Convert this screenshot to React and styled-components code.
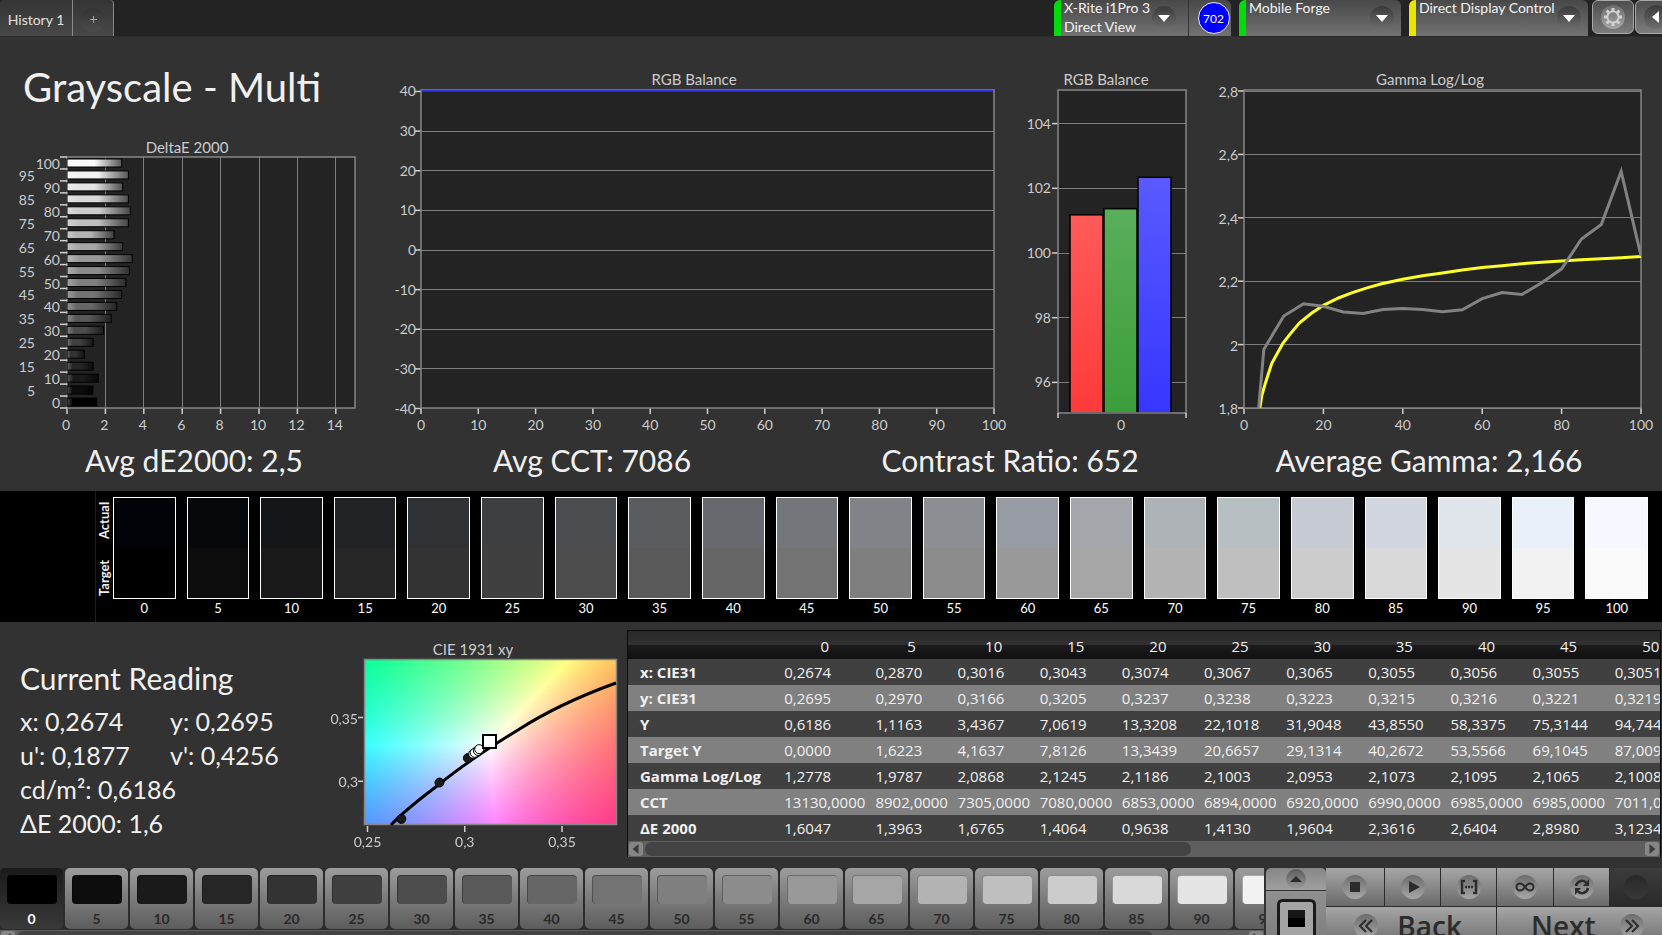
/* Third Party */
import React, { useEffect, useRef } from 'react'
import styled, { createGlobalStyle, css } from 'styled-components'

const GlobalStyle = createGlobalStyle`
    * {
        box-sizing: border-box;
    }

    body {
        margin: 0;
        background: #323232;
        color: #f0f0f0;
        font-family: Lato, "Liberation Sans", sans-serif;
        font-size: 14px;
    }

    button {
        margin: 0;
        padding: 0;
        border: 0;
        background: none;
        color: inherit;
        font: inherit;
        cursor: pointer;
    }
`

/* Data */
const LEVELS = Array.from({ length: 21 }, (_, i) => i * 5)

const DELTA_E = [
    1.6, 1.4, 1.68, 1.41, 0.96, 1.41, 1.96, 2.36, 2.64, 2.9, 3.12,
    3.3, 3.45, 2.95, 2.5, 3.25, 3.35, 3.25, 2.95, 3.25, 2.9
]

const ACTUAL = [
    '#020308', '#06080c', '#151618', '#212225', '#303134', '#3e3f41', '#4c4d50',
    '#5b5c60', '#68696e', '#73767b', '#808388', '#8b8f93', '#979ba4', '#a3a7ac',
    '#adb2b7', '#b7bfc3', '#c5cad3', '#d2d6e1', '#dfe5ea', '#e9f0fa', '#f5f9ff'
]

const MEASURED_GAMMA = [
    [0, 1.2778], [5, 1.985], [10, 2.09], [15, 2.129], [20, 2.121], [25, 2.103],
    [30, 2.098], [35, 2.111], [40, 2.114], [45, 2.111], [50, 2.104], [55, 2.11],
    [60, 2.145], [65, 2.164], [70, 2.158], [75, 2.195], [80, 2.239],
    [85, 2.333], [90, 2.379], [95, 2.546], [100, 2.28]
]

const TARGET_GAMMA = [
    [4, 1.8], [4.5, 1.84], [5.5, 1.883], [7, 1.941], [9.8, 2.004], [11.6, 2.033],
    [14, 2.069], [17, 2.099], [20, 2.124], [23.8, 2.147], [27.3, 2.164],
    [31, 2.179], [34.7, 2.192], [40, 2.206], [45, 2.217], [50, 2.226],
    [55, 2.235], [60, 2.243], [65, 2.249], [70, 2.255], [75, 2.26],
    [80, 2.264], [85, 2.268], [90, 2.271], [95, 2.274], [100, 2.278]
]

const CIE_POINTS = [
    [0.2674, 0.2705], [0.287, 0.299], [0.3016, 0.3182], [0.3043, 0.3215], [0.3067, 0.3243],
    [0.3056, 0.3228], [0.3051, 0.3223], [0.3068, 0.3238], [0.3074, 0.3252]
]

const TABLE_ROWS = [
    ['x: CIE31', '0,2674', '0,2870', '0,3016', '0,3043', '0,3074', '0,3067', '0,3065', '0,3055', '0,3056', '0,3055', '0,3051'],
    ['y: CIE31', '0,2695', '0,2970', '0,3166', '0,3205', '0,3237', '0,3238', '0,3223', '0,3215', '0,3216', '0,3221', '0,3219'],
    ['Y', '0,6186', '1,1163', '3,4367', '7,0619', '13,3208', '22,1018', '31,9048', '43,8550', '58,3375', '75,3144', '94,744'],
    ['Target Y', '0,0000', '1,6223', '4,1637', '7,8126', '13,3439', '20,6657', '29,1314', '40,2672', '53,5566', '69,1045', '87,009'],
    ['Gamma Log/Log', '1,2778', '1,9787', '2,0868', '2,1245', '2,1186', '2,1003', '2,0953', '2,1073', '2,1095', '2,1065', '2,1008'],
    ['CCT', '13130,0000', '8902,0000', '7305,0000', '7080,0000', '6853,0000', '6894,0000', '6920,0000', '6990,0000', '6985,0000', '6985,0000', '7011,0000'],
    ['ΔE 2000', '1,6047', '1,3963', '1,6765', '1,4064', '0,9638', '1,4130', '1,9604', '2,3616', '2,6404', '2,8980', '3,1234']
]

const gray = (level) => {
    const v = Math.min(Math.round(level * 2.55), 250)
    return `rgb(${v}, ${v}, ${v})`
}

const comma = (n) => String(n).replace('.', ',')

const toPoints = (data, x, y) => data.map(([a, b]) => `${x(a)},${y(b)}`).join(' ')

/* Page */
const Page = styled.div`
    display: flex;
    flex-direction: column;
    height: 100vh;
    overflow: hidden;
`

const TopBar = styled.header`
    display: flex;
    justify-content: space-between;
    flex: none;
    height: 37px;
    background: #232323;
    border-bottom: 1px solid #2b2b2b;
    overflow: hidden;
`

const Tabs = styled.nav`
    display: flex;
`

const Tab = styled.button`
    display: flex;
    align-items: center;
    justify-content: center;
    width: ${props => props.$wide ? '73px' : '41px'};
    padding-top: 3px;
    color: #e0e0e0;
    white-space: nowrap;
    background: linear-gradient(#343434, #484848);
    border-right: 1px solid #8a8a8a;
    border-radius: ${props => props.$wide ? '4px 0 0 0' : '0 4px 0 0'};
`

const Round = styled.span`
    display: flex;
    align-items: center;
    justify-content: center;
    flex: none;
    width: 24px;
    height: 24px;
    border-radius: 50%;
    background: ${props => props.$light
        ? 'linear-gradient(#6c6c6c, #a6a6a6)'
        : 'linear-gradient(#3a3a3a, #6e6e6e)'};
`

const AddRound = styled(Round)`
    background: linear-gradient(#323232, #4c4c4c);
`

const Devices = styled.div`
    display: flex;
    flex: none;
    margin-right: -16px;
`

const Device = styled.div`
    display: flex;
    width: ${props => props.$width}px;
    margin-right: 8px;
    border-left: 7px solid ${props => props.$status};
    border-radius: 6px 6px 0 0;
    background: linear-gradient(#484848, #727272);
`

const DeviceName = styled.div`
    flex: 1;
    padding-left: 3px;
    line-height: 19px;
    margin-top: -2px;
    color: #f4f4f4;
    white-space: nowrap;
`

const DeviceMenu = styled.button`
    align-self: flex-start;
    margin: 6px ${props => props.$inset ? '12px' : '7px'} 0 0;
`

const MeterCell = styled.div`
    display: flex;
    align-items: center;
    justify-content: center;
    width: 43px;
    padding-left: 7px;
    border-left: 1px solid #353535;
`

const Meter = styled.span`
    display: flex;
    align-items: center;
    justify-content: center;
    flex: none;
    width: 32px;
    height: 32px;
    border: 1px solid #f0f0f0;
    border-radius: 50%;
    background: #0000ff;
    color: #ffffff;
    font-size: 12px;
`

const ToolButton = styled.button`
    display: flex;
    align-items: center;
    justify-content: center;
    width: 42px;
    height: 34px;
    margin-right: 1px;
    border: 1px solid #a8a8a8;
    border-radius: 6px;
    background: linear-gradient(#4e4e4e, #7c7c7c);

    &:first-of-type {
        margin-left: -4px;
    }
`

/* Charts */
const Charts = styled.section`
    display: grid;
    grid-template-columns: 390fr 622fr 200fr 450fr;
    align-items: end;
    flex: none;
`

const Title = styled.h1`
    margin: 28px 0 26px 23px;
    font-size: 40px;
    font-weight: 400;
    line-height: 44px;
    white-space: nowrap;
`

const ChartSvg = styled.svg`
    display: block;
    width: 100%;
    height: auto;
    overflow: visible;

    text {
        fill: #cccccc;
        font-size: 14px;
    }

    .title {
        font-size: 15px;
    }

    .plot {
        fill: #232323;
    }

    .frame {
        fill: none;
        stroke: #868686;
        stroke-width: 1.5;
    }

    .grid {
        stroke: #7c7c7c;
        shape-rendering: crispEdges;
    }

    .tick {
        stroke: #d0d0d0;
        stroke-width: 1.5;
    }
`

const Summary = styled.section`
    display: grid;
    grid-template-columns: 388fr 408fr 428fr 410fr 28fr;
    flex: none;
    padding: 8px 0 14px;
    font-size: 30px;
    line-height: 34px;
    text-align: center;
    white-space: nowrap;
`

/* Swatches */
const SwatchStrip = styled.section`
    display: flex;
    flex: none;
    padding-right: 14px;
    background: #000000;
`

const StripSide = styled.div`
    width: 96px;
    border-right: 1px solid #1f1f1f;
`

const StripLabels = styled.div`
    display: grid;
    grid-template-rows: 58px 58px;
    width: 17px;
    font-size: 13px;
    font-weight: 700;
    line-height: 17px;

    span {
        writing-mode: vertical-rl;
        transform: rotate(180deg);
        text-align: center;
    }
`

const Swatches = styled.div`
    display: grid;
    grid-template-columns: repeat(21, 1fr);
    gap: 11px;
    flex: 1;
`

const Swatch = styled.figure`
    margin: 6px 0 0;
    text-align: center;
    font-size: 13px;
    line-height: 19px;
`

const SwatchBox = styled.div`
    height: 102px;
    border: 1px solid #ffffff;
    background: linear-gradient(
        ${props => props.$actual} 50%,
        ${props => props.$target} 50%
    );
`

const SwatchCaption = styled.figcaption`
    height: 23px;
    color: #ffffff;
`

/* Lower part */
const Lower = styled.section`
    display: grid;
    grid-template-columns: 340fr 287fr 1035fr;
    align-items: start;
    flex: 1;
    min-height: 0;
`

const Reading = styled.div`
    padding: 39px 0 0 20px;
    font-size: 25px;
    line-height: 34px;
    white-space: nowrap;
`

const ReadingTitle = styled.h2`
    margin: 0 0 9px;
    font-size: 30px;
    font-weight: 400;
    line-height: 34px;
`

const ReadingRow = styled.div`
    display: grid;
    grid-template-columns: 150px 1fr;
`

const TablePanel = styled.div`
    min-width: 0;
    margin: 8px 1px 0 0;
    border: 1px solid #0a0a0a;
    border-bottom: 0;
    overflow: hidden;
`

const Readings = styled.table`
    width: 1064px;
    table-layout: fixed;
    border-collapse: collapse;
    font-family: "Open Sans", "Noto Sans", sans-serif;
    font-size: 15px;
    line-height: 20px;
    white-space: nowrap;

    thead {
        background: linear-gradient(#2a2a2a, #303030 48%, #1b1b1b 52%, #101010);
    }

    th, td {
        height: 26px;
        padding: 0 0 0 5px;
        font-weight: 400;
        text-align: left;
    }

    thead th {
        height: 28px;
        padding: 2px 0 0;
        text-align: center;
    }

    tbody th {
        padding-left: 12px;
        font-weight: 700;
    }

    tbody tr {
        background: #404040;
    }

    tbody tr:nth-child(even) {
        background: #808080;
    }
`

const ScrollTrack = styled.div`
    display: flex;
    align-items: center;
    justify-content: space-between;
    height: 16px;
    padding: 0 1px;
    background: #5f5f5f;
`

const ScrollButton = styled.button`
    display: flex;
    align-items: center;
    justify-content: center;
    width: 14px;
    height: 14px;
    border-radius: 3px;
    background: #868686;
`

const ScrollThumb = styled.div`
    width: ${props => props.$size};
    height: 14px;
    margin: 0 auto 0 2px;
    border-radius: 7px;
    background: #434343;
`

/* Footer */
const Footer = styled.footer`
    display: flex;
    flex: none;
    height: 67px;
    overflow: hidden;
`

const PatchArea = styled.div`
    flex: 1;
    min-width: 0;
    overflow: hidden;
`

const PatchList = styled.div`
    display: flex;
    gap: 2px;
    height: 62px;
    background: #2c2c2c;
`

const Patch = styled.button`
    display: flex;
    flex-direction: column;
    align-items: center;
    flex: none;
    width: 63px;
    height: 61px;
    padding-top: 7px;
    border-radius: 5px;
    color: #2a2a2a;
    font-size: 14px;
    font-weight: 700;
    line-height: 20px;
    background: linear-gradient(#9c9c9c, #5c5c5c);

    ${props => props.$selected && css`
        color: #ffffff;
        background: linear-gradient(#1a1a1a, #3a3a3a);
    `}
`

const PatchColor = styled.span`
    width: 50px;
    height: 30px;
    margin-bottom: 5px;
    border-radius: 4px;
    border-top: 1px solid rgba(0, 0, 0, 0.3);
    border-left: 1px solid rgba(0, 0, 0, 0.3);
    background: ${props => props.$color};
`

const PatchMode = styled.div`
    display: flex;
    flex-direction: column;
    width: 60px;
    margin-left: 2px;
    gap: 1px;
`

const ModeButton = styled.button`
    display: flex;
    align-items: center;
    justify-content: center;
    flex: none;
    height: 22px;
    border-radius: 5px 5px 0 0;
    background: linear-gradient(#868686, #a0a0a0);
`

const TargetButton = styled.button`
    display: flex;
    align-items: flex-start;
    justify-content: center;
    flex: none;
    height: 60px;
    padding-top: 8px;
    background: linear-gradient(#909090, #7a7a7a);
`

const SmallRound = styled(Round)`
    width: 20px;
    height: 20px;
    background: linear-gradient(#5c5c5c, #9a9a9a);
`

const Controls = styled.div`
    display: grid;
    grid-template-columns: 58px 55px 55px 56px 55px 52px;
    grid-template-rows: 38px 40px;
    gap: 1px;
    background: #2c2c2c;
`

const Control = styled.button`
    display: flex;
    align-items: center;
    justify-content: center;
    background: linear-gradient(#a6a6a6, #6a6a6a);

    &:disabled {
        background: linear-gradient(#3c3c3c, #2a2a2a);
    }

    &:disabled ${Round} {
        background: linear-gradient(#282828, #383838);
    }
`

const StepButton = styled(Control)`
    grid-column: span 3;
    justify-content: space-between;
    padding: 0 ${props => props.$next ? '18px 2px 34px' : '34px 2px 28px'};
    color: #2c2c2c;
    font-family: "Open Sans", "Noto Sans", sans-serif;
    font-size: 28px;
    font-weight: 600;
    line-height: 34px;
`

/* Icons */
const Caret = ({ dir = 'down', color = '#ffffff', size = 12 }) => {
    const shapes = {
        down: '0,3 12,3 6,10',
        up: '0,9 12,9 6,3',
        left: '9,0 9,12 2,6',
        right: '3,0 3,12 10,6'
    }
    return (
        <svg width={size} height={size} viewBox='0 0 12 12' aria-hidden='true'>
            <polygon points={shapes[dir]} fill={color} />
        </svg>
    )
}

const GearIcon = () => (
    <svg width='20' height='20' viewBox='-10 -10 20 20' fill='none' aria-hidden='true'>
        <circle r='5.6' stroke='#d2d2d2' strokeWidth='1.8' />
        {[0, 45, 90, 135, 180, 225, 270, 315].map(a => (
            <rect key={a} x='-1.5' y='-9' width='3' height='3' fill='#d2d2d2' transform={`rotate(${a})`} />
        ))}
    </svg>
)

const ICONS = {
    stop: <rect x='-5' y='-5' width='10' height='10' fill='#2c2c2c' />,
    play: <polygon points='-4,-6 7,0 -4,6' fill='#2c2c2c' />,
    range: (
        <g stroke='#2c2c2c' strokeWidth='2.500'>
            <path d='M-4 -6H-7V6H-4M4 -6H7V6H4' />
            <path d='M-4 0H4' strokeDasharray='2 1' />
        </g>
    ),
    loop: (
        <path
            d='M0 0C-2 -3 -3.500 -3.500 -5 -3.500A3.500 3.500 0 0 0 -5 3.500C-3.500 3.500 -2 3 0 0C2 -3 3.500 -3.500 5 -3.500A3.500 3.500 0 0 1 5 3.500C3.500 3.500 2 3 0 0Z'
            stroke='#2c2c2c' strokeWidth='2'
        />
    ),
    refresh: (
        <g>
            <path d='M-6 -1A6 6 0 0 1 4 -4.500M6 1A6 6 0 0 1 -4 4.500' stroke='#2c2c2c' strokeWidth='2.500' />
            <path d='M7 -8V-1H1ZM-7 8V1H-1Z' fill='#2c2c2c' />
        </g>
    ),
    back: <path d='M0 -6L-6 0L0 6M6 -6L0 0L6 6' stroke='#2c2c2c' strokeWidth='2' />,
    next: <path d='M-6 -6L0 0L-6 6M0 -6L6 0L0 6' stroke='#2c2c2c' strokeWidth='2' />
}

const Icon = ({ name }) => (
    <svg width='20' height='20' viewBox='-10 -10 20 20' fill='none' aria-hidden='true'>
        {ICONS[name]}
    </svg>
)

const TargetIcon = () => (
    <svg width='39' height='44' viewBox='0 0 39 44' aria-hidden='true'>
        <rect x='1.500' y='1.500' width='36' height='42' rx='4' fill='#a4a4a4' stroke='#1a1a1a' strokeWidth='3' />
        <rect x='11' y='11' width='17' height='17' fill='#000000' />
        <rect x='11' y='11' width='17' height='8' fill='#161616' />
    </svg>
)

/* Chart drawings */
const DeltaEChart = () => {
    const left = 67
    const top = 22
    const bottom = 273
    const row = (bottom - top) / 21
    const x = v => left + v * 19.2

    return (
        <ChartSvg viewBox='0 0 390 300' role='img' aria-label='DeltaE 2000'>
            <defs>
                <linearGradient id='shine'>
                    <stop offset='0' stopColor='#fff' stopOpacity='0.3' />
                    <stop offset='0.2' stopColor='#fff' stopOpacity='0' />
                    <stop offset='0.5' stopColor='#000' stopOpacity='0' />
                    <stop offset='1' stopColor='#000' stopOpacity='0.65' />
                </linearGradient>
            </defs>
            <text className='title' x='187' y='18' textAnchor='middle'>DeltaE 2000</text>
            <rect className='plot' x={left} y={top} width='288' height={bottom - top} />
            {[0, 2, 4, 6, 8, 10, 12, 14].map(v => (
                <g key={v}>
                    {v > 0 && <line className='grid' x1={x(v)} x2={x(v)} y1={top} y2={bottom} />}
                    <line className='tick' x1={x(v)} x2={x(v)} y1={bottom} y2={bottom + 6} />
                    <text x={x(v) - 1} y='295' textAnchor='middle'>{v}</text>
                </g>
            ))}
            <rect className='frame' x={left} y={top} width='288' height={bottom - top} />
            {LEVELS.map((level, i) => {
                const y = bottom - (i + 1) * row
                const bar = { x: left, y: y + 2, width: x(DELTA_E[i]) - left - 1, height: 8 }
                return (
                    <g key={level}>
                        <line className='tick' x1='60' x2={left} y1={y} y2={y} />
                        <text x={level % 10 ? 35 : 60} y={y + 12} textAnchor='end'>{level}</text>
                        <rect {...bar} fill={gray(level)} />
                        <rect {...bar} fill='url(#shine)' stroke='#000000' />
                    </g>
                )
            })}
            <line className='tick' x1='60' x2={left} y1={bottom} y2={bottom} />
        </ChartSvg>
    )
}

const BalanceChart = () => {
    const x = v => 31 + v * 5.73
    const y = v => 180 - v * 3.963

    return (
        <ChartSvg viewBox='0 0 622 365' role='img' aria-label='RGB Balance'>
            <text className='title' x='304' y='15' textAnchor='middle'>RGB Balance</text>
            <rect className='plot' x='31' y='20' width='573' height='318' />
            {[30, 20, 10, 0, -10, -20, -30].map(v => (
                <line key={v} className='grid' x1='31' x2='604' y1={y(v)} y2={y(v)} />
            ))}
            {[40, 30, 20, 10, 0, -10, -20, -30, -40].map(v => (
                <g key={v}>
                    <line className='tick' x1='25' x2='31' y1={y(v)} y2={y(v)} />
                    <text x='26' y={y(v) + 5} textAnchor='end'>{v}</text>
                </g>
            ))}
            {[0, 10, 20, 30, 40, 50, 60, 70, 80, 90, 100].map(v => (
                <g key={v}>
                    <line className='tick' x1={x(v)} x2={x(v)} y1='338' y2='344' />
                    <text x={x(v)} y='360' textAnchor='middle'>{v}</text>
                </g>
            ))}
            <rect className='frame' x='31' y='20' width='573' height='318' />
            <line x1='32' x2='603' y1='21' y2='21' stroke='#2c2ce0' strokeWidth='2' />
        </ChartSvg>
    )
}

const RGB_BARS = [
    { name: 'red', x: 58, value: 101.18, from: '#ff5a5a', to: '#ff3a3a' },
    { name: 'green', x: 92, value: 101.37, from: '#5aae5a', to: '#3a9e3a' },
    { name: 'blue', x: 126, value: 102.34, from: '#5a5aff', to: '#3636ff' }
]

const BalanceBars = () => {
    const y = v => 183 - (v - 100) * 32.35

    return (
        <ChartSvg viewBox='0 0 200 365' role='img' aria-label='RGB Balance at 0'>
            <defs>
                {RGB_BARS.map(bar => (
                    <linearGradient key={bar.name} id={bar.name} x2='0' y2='1'>
                        <stop offset='0' stopColor={bar.from} />
                        <stop offset='1' stopColor={bar.to} />
                    </linearGradient>
                ))}
            </defs>
            <text className='title' x='94' y='15' textAnchor='middle'>RGB Balance</text>
            <rect className='plot' x='46' y='20' width='128' height='323' />
            {[104, 102, 100, 98, 96].map(v => (
                <g key={v}>
                    <line className='grid' x1='46' x2='174' y1={y(v)} y2={y(v)} />
                    <line className='tick' x1='40' x2='46' y1={y(v)} y2={y(v)} />
                    <text x='39' y={y(v) + 5} textAnchor='end'>{v}</text>
                </g>
            ))}
            {RGB_BARS.map(bar => (
                <rect
                    key={bar.name} x={bar.x} y={y(bar.value)} width='33' height={343 - y(bar.value)}
                    fill={`url(#${bar.name})`} stroke='#000000' strokeWidth='1.500'
                />
            ))}
            <rect className='frame' x='46' y='20' width='128' height='323' />
            <line className='tick' x1='46' x2='46' y1='343' y2='348' />
            <line className='tick' x1='174' x2='174' y1='343' y2='348' />
            <text x='109' y='360' textAnchor='middle'>0</text>
        </ChartSvg>
    )
}

const GammaChart = () => {
    const x = v => 32 + v * 3.97
    const y = v => 338 - (v - 1.8) * 317

    return (
        <ChartSvg viewBox='0 0 450 365' role='img' aria-label='Gamma Log/Log'>
            <defs>
                <clipPath id='gamma-plot'>
                    <rect x='32' y='20' width='397' height='318' />
                </clipPath>
            </defs>
            <text className='title' x='218' y='15' textAnchor='middle'>Gamma Log/Log</text>
            <rect className='plot' x='32' y='20' width='397' height='318' />
            {[2.8, 2.6, 2.4, 2.2, 2, 1.8].map(v => (
                <g key={v}>
                    <line className='grid' x1='32' x2='429' y1={y(v)} y2={y(v)} />
                    <line className='tick' x1='26' x2='32' y1={y(v)} y2={y(v)} />
                    <text x='26' y={y(v) + 6} textAnchor='end'>{comma(v)}</text>
                </g>
            ))}
            {[0, 20, 40, 60, 80, 100].map(v => (
                <g key={v}>
                    <line className='tick' x1={x(v)} x2={x(v)} y1='338' y2='344' />
                    <text x={x(v)} y='360' textAnchor='middle'>{v}</text>
                </g>
            ))}
            <rect className='frame' x='32' y='20' width='397' height='318' />
            <g clipPath='url(#gamma-plot)' fill='none'>
                <polyline points={toPoints(TARGET_GAMMA, x, y)} stroke='#ffff28' strokeWidth='3' />
                <polyline points={toPoints(MEASURED_GAMMA, x, y)} stroke='#828282' strokeWidth='3' />
            </g>
        </ChartSvg>
    )
}

const CieFill = styled.canvas`
    display: block;
    width: 253px;
    height: 166px;
`

const CieChart = () => {
    const canvas = useRef(null)
    const x = v => 27.5 + (v - 0.25) * 1945
    const y = v => 159.3 - (v - 0.3) * 1276

    useEffect(() => {
        const ctx = canvas.current.getContext('2d')
        const image = ctx.createImageData(253, 166)

        for (let row = 0; row < 166; row++) {
            for (let col = 0; col < 253; col++) {
                const cx = 0.25 + (col - 3.5) / 1945
                const cy = 0.3 + (122.3 - row) / 1276
                const X = cx / cy
                const Z = (1 - cx - cy) / cy
                const rgb = [
                    3.2406 * X - 1.5372 - 0.4986 * Z,
                    -0.9689 * X + 1.8758 + 0.0415 * Z,
                    0.0557 * X - 0.204 + 1.057 * Z
                ]
                const max = Math.max(...rgb)
                const at = (row * 253 + col) * 4
                rgb.forEach((c, i) => { image.data[at + i] = 255 * Math.max(c, 0) / max })
                image.data[at + 3] = 255
            }
        }
        ctx.putImageData(image, 0, 0)
    }, [])

    return (
        <ChartSvg viewBox='0 0 287 234' role='img' aria-label='CIE 1931 xy'>
            <text className='title' x='133' y='33' textAnchor='middle'>CIE 1931 xy</text>
            <foreignObject x='24' y='37' width='253' height='166'>
                <CieFill ref={canvas} width='253' height='166' />
            </foreignObject>
            <rect className='frame' x='24.500' y='37.500' width='252' height='165' />
            <path
                d='M51 203C65 188 80 177 97 164C119 146 150 125 178 108C206 90 240 74 276 61'
                fill='none' stroke='#000000' strokeWidth='3'
            />
            {CIE_POINTS.map(([cx, cy], i) => (
                <circle key={i} cx={x(cx)} cy={y(cy)} r='4.500' fill={i < 3 ? '#1a1a1a' : '#ffffff'} stroke='#000000' />
            ))}
            <rect x='143' y='113' width='13' height='13' fill='#ffffff' stroke='#000000' strokeWidth='2' />
            {[0.25, 0.3, 0.35].map(v => (
                <g key={v}>
                    <line className='tick' x1={x(v)} x2={x(v)} y1='204' y2='210' />
                    <text x={x(v)} y='225' textAnchor='middle'>{comma(v)}</text>
                </g>
            ))}
            {[0.35, 0.3].map(v => (
                <g key={v}>
                    <line className='tick' x1='18' x2='23' y1={y(v)} y2={y(v)} />
                    <text x='18' y={y(v) + 6} textAnchor='end'>{comma(v)}</text>
                </g>
            ))}
        </ChartSvg>
    )
}

const Header = () => (
    <TopBar>
        <Tabs>
            <Tab $wide>History 1</Tab>
            <Tab aria-label='Add tab'>
                <AddRound>
                    <svg width='9' height='9' viewBox='0 0 9 9' aria-hidden='true'>
                        <path d='M4.500 1V8M1 4.500H8' stroke='#a0a0a0' />
                    </svg>
                </AddRound>
            </Tab>
        </Tabs>
        <Devices>
            <Device $width={177} $status='#00dc0a'>
                <DeviceName>X-Rite i1Pro 3<br />Direct View</DeviceName>
                <DeviceMenu $inset aria-label='Meter menu'><Round><Caret /></Round></DeviceMenu>
                <MeterCell><Meter>702</Meter></MeterCell>
            </Device>
            <Device $width={162} $status='#00dc0a'>
                <DeviceName>Mobile Forge</DeviceName>
                <DeviceMenu aria-label='Source menu'><Round><Caret /></Round></DeviceMenu>
            </Device>
            <Device $width={179} $status='#e6e600'>
                <DeviceName>Direct Display Control</DeviceName>
                <DeviceMenu aria-label='Display menu'><Round><Caret /></Round></DeviceMenu>
            </Device>
            <ToolButton aria-label='Settings'><Round $light><GearIcon /></Round></ToolButton>
            <ToolButton aria-label='Collapse'><Round><Caret dir='left' /></Round></ToolButton>
        </Devices>
    </TopBar>
)

const ReadingsTable = () => (
    <TablePanel>
        <Readings>
            <colgroup>
                <col style={{ width: 151 }} />
                <col style={{ width: 91 }} />
                {LEVELS.slice(1, 11).map(level => <col key={level} style={{ width: 82 }} />)}
            </colgroup>
            <thead>
                <tr>
                    <th />
                    {LEVELS.slice(0, 11).map(level => <th key={level} scope='col'>{level}</th>)}
                </tr>
            </thead>
            <tbody>
                {TABLE_ROWS.map(([name, ...values]) => (
                    <tr key={name}>
                        <th scope='row'>{name}</th>
                        {values.map((value, i) => <td key={i}>{value}</td>)}
                    </tr>
                ))}
            </tbody>
        </Readings>
        <ScrollTrack>
            <ScrollButton aria-label='Scroll left'><Caret dir='left' color='#3a3a3a' size={10} /></ScrollButton>
            <ScrollThumb $size='53%' />
            <ScrollButton aria-label='Scroll right'><Caret dir='right' color='#3a3a3a' size={10} /></ScrollButton>
        </ScrollTrack>
    </TablePanel>
)

const PatchBar = () => (
    <Footer>
        <PatchArea>
            <PatchList>
                {LEVELS.map(level => (
                    <Patch key={level} $selected={level === 0}>
                        <PatchColor $color={gray(level)} />
                        {level}
                    </Patch>
                ))}
            </PatchList>
            <ScrollTrack>
                <ScrollButton aria-label='Scroll patches left'><Caret dir='left' color='#3a3a3a' size={10} /></ScrollButton>
                <ScrollThumb $size='90%' />
                <ScrollButton aria-label='Scroll patches right'><Caret dir='right' color='#3a3a3a' size={10} /></ScrollButton>
            </ScrollTrack>
        </PatchArea>
        <PatchMode>
            <ModeButton aria-label='Expand'>
                <SmallRound><Caret dir='up' color='#2c2c2c' /></SmallRound>
            </ModeButton>
            <TargetButton aria-label='Patch window'><TargetIcon /></TargetButton>
        </PatchMode>
        <Controls>
            {['stop', 'play', 'range', 'loop', 'refresh'].map(name => (
                <Control key={name} aria-label={name}>
                    <Round $light><Icon name={name} /></Round>
                </Control>
            ))}
            <Control disabled aria-label='record'><Round /></Control>
            <StepButton>
                <Round $light><Icon name='back' /></Round>
                Back
            </StepButton>
            <StepButton $next>
                Next
                <Round $light><Icon name='next' /></Round>
            </StepButton>
        </Controls>
    </Footer>
)

export default function App () {
    return (
        <Page>
            <GlobalStyle />
            <Header />
            <Charts>
                <div>
                    <Title>Grayscale - Multi</Title>
                    <DeltaEChart />
                </div>
                <BalanceChart />
                <BalanceBars />
                <GammaChart />
            </Charts>
            <Summary>
                <span>Avg dE2000: 2,5</span>
                <span>Avg CCT: 7086</span>
                <span>Contrast Ratio: 652</span>
                <span>Average Gamma: 2,166</span>
            </Summary>
            <SwatchStrip>
                <StripSide />
                <StripLabels>
                    <span>Actual</span>
                    <span>Target</span>
                </StripLabels>
                <Swatches>
                    {LEVELS.map((level, i) => (
                        <Swatch key={level}>
                            <SwatchBox $actual={ACTUAL[i]} $target={gray(level)} />
                            <SwatchCaption>{level}</SwatchCaption>
                        </Swatch>
                    ))}
                </Swatches>
            </SwatchStrip>
            <Lower>
                <Reading>
                    <ReadingTitle>Current Reading</ReadingTitle>
                    <ReadingRow><span>x: 0,2674</span><span>y: 0,2695</span></ReadingRow>
                    <ReadingRow><span>u': 0,1877</span><span>v': 0,4256</span></ReadingRow>
                    <ReadingRow><span>cd/m²: 0,6186</span></ReadingRow>
                    <ReadingRow><span>ΔE 2000: 1,6</span></ReadingRow>
                </Reading>
                <CieChart />
                <ReadingsTable />
            </Lower>
            <PatchBar />
        </Page>
    )
}
